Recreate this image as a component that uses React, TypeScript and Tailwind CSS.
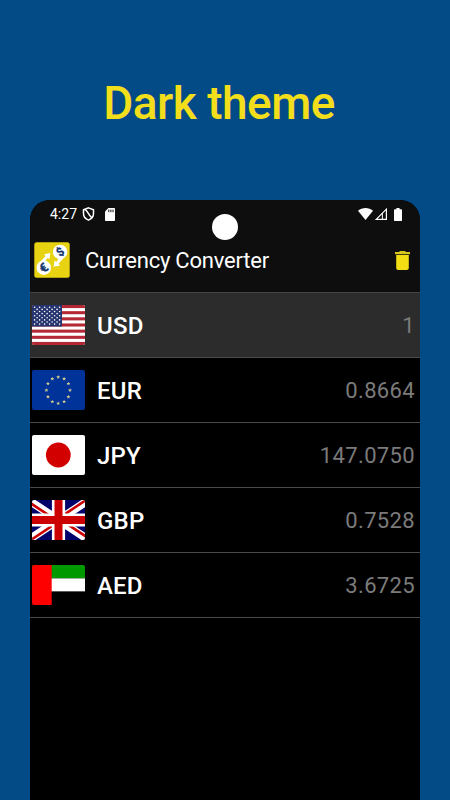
import type { ReactNode } from "react";

type Row = {
  code: string;
  value: string;
  flag: ReactNode;
};

const canton = Array.from({ length: 9 }, (_, r) =>
  Array.from({ length: r % 2 === 0 ? 6 : 5 }, (_, c) => ({
    x: 2.6 + c * 5 + (r % 2 === 0 ? 0 : 2.5),
    y: 2.3 + r * 2.1,
  }))
).flat();

const star = "M0-2 .55-.7 2-.65.85.3 1.25 1.7 0 .9-1.25 1.7-.85.3-2-.65-.55-.7Z";

function UsFlag() {
  return (
    <svg viewBox="0 0 53 40" className="block h-full w-full">
      <rect width="53" height="40" fill="#fff" />
      {[0, 2, 4, 6, 8, 10, 12].map((i) => (
        <rect key={i} y={(i * 40) / 13} width="53" height={40 / 13} fill="#b52735" />
      ))}
      <rect width="30" height="21.5" fill="#25346f" />
      {canton.map((s, i) => (
        <circle key={i} cx={s.x} cy={s.y} r="0.8" fill="#fff" />
      ))}
    </svg>
  );
}

function EuFlag() {
  return (
    <svg viewBox="0 0 53 40" className="block h-full w-full">
      <rect width="53" height="40" fill="#003399" />
      {Array.from({ length: 12 }, (_, i) => {
        const a = (i * Math.PI) / 6;
        const x = 26.2 + 11.8 * Math.sin(a);
        const y = 20.2 - 13.2 * Math.cos(a);
        return <path key={i} d={star} transform={`translate(${x} ${y})`} fill="#d3cd8c" />;
      })}
    </svg>
  );
}

function JpFlag() {
  return (
    <svg viewBox="0 0 53 40" className="block h-full w-full">
      <rect width="53" height="40" fill="#fff" />
      <circle cx="26.3" cy="20" r="12.4" fill="#d30000" />
    </svg>
  );
}

function GbFlag() {
  return (
    <svg viewBox="0 0 53 40" className="block h-full w-full">
      <rect width="53" height="40" fill="#00006b" />
      <path d="M-6-1.5 59 41.5M59-1.5-6 41.5" stroke="#fff" strokeWidth="8" />
      <path d="M-6 .2 26.5 21.7M59 39.8 26.5 18.3M59-3.2 26.5 18.3M-6 43.2 26.5 21.7" stroke="#cc0000" strokeWidth="2.6" />
      <path d="M26.5 0V40M0 20H53" stroke="#fff" strokeWidth="13.2" />
      <path d="M26.5 0V40M0 20H53" stroke="#cc0000" strokeWidth="8" />
    </svg>
  );
}

function AeFlag() {
  return (
    <svg viewBox="0 0 53 40" className="block h-full w-full">
      <rect width="53" height="13.4" fill="#009900" />
      <rect y="13.4" width="53" height="13.2" fill="#fff" />
      <rect y="26.6" width="53" height="13.4" fill="#000" />
      <rect width="19.7" height="40" fill="#ff0000" />
    </svg>
  );
}

const rows: Row[] = [
  { code: "USD", value: "1", flag: <UsFlag /> },
  { code: "EUR", value: "0.8664", flag: <EuFlag /> },
  { code: "JPY", value: "147.0750", flag: <JpFlag /> },
  { code: "GBP", value: "0.7528", flag: <GbFlag /> },
  { code: "AED", value: "3.6725", flag: <AeFlag /> },
];

function AppLogo() {
  return (
    <svg width="36" height="36" viewBox="0 0 36 36" className="shrink-0">
      <rect x="0.3" y="0.3" width="35.4" height="35.4" rx="2.5" fill="#e8d313" />
      <circle cx="9.8" cy="25.7" r="7.2" fill="#fff" />
      <circle cx="26.1" cy="9.9" r="7.2" fill="#fff" />
      <path d="M6 20 11.7 13.9 10 12.2 16.4 10.9 15.4 17.2 13.7 15.7 10.5 20Z" fill="#fff" />
      <path d="M30 15.5 24.5 21.8 26.2 23.5 19.6 24.8 20.6 18.4 22.4 20 25.4 15.5Z" fill="#fff" />
      <text x="9.6" y="30.2" textAnchor="middle" transform="rotate(-38 9.6 25.7)" fontFamily="Roboto, sans-serif" fontWeight="700" fontSize="12.5" fill="#12356f" stroke="#12356f" strokeWidth=".4">€</text>
      <text x="26.1" y="13.9" textAnchor="middle" transform="rotate(-38 26.1 9.9)" fontFamily="Roboto, sans-serif" fontWeight="700" fontSize="11.5" fill="#12356f" stroke="#12356f" strokeWidth=".3">$</text>
    </svg>
  );
}

function StatusBar() {
  return (
    <div className="flex h-[28px] items-center pl-5 pr-[18px] text-white">
      <span className="w-8 text-[14px] leading-none">4:27</span>
      <svg width="13" height="14" viewBox="0 0 12 14" fill="none" stroke="#fff" strokeWidth="1.5">
        <path d="M6 .9 11 2.8V6.6C11 9.7 9 12 6 13.1 3 12 1 9.7 1 6.6V2.8Z" />
        <path d="M2 2.6C5.4 3.2 5 7.2 9.4 10.8" />
      </svg>
      <svg width="10" height="13" viewBox="0 0 10 13" className="ml-[10px]">
        <path d="M3.4 0H9C9.6 0 10 .4 10 1V12C10 12.6 9.6 13 9 13H1C.4 13 0 12.6 0 12V3.6Z" fill="#fff" />
        <path d="M3.8 1.6V4.2M5.9 1.6V4.2M8 1.6V4.2" stroke="#0f0f0f" strokeWidth="1" />
      </svg>
      <div className="ml-auto flex items-center">
        <svg width="15" height="12" viewBox="0 0 15 12">
          <path d="M7.5 12 0 2.7C4.4-.9 10.6-.9 15 2.7Z" fill="#fff" />
        </svg>
        <svg width="12" height="12" viewBox="0 0 12 12" className="ml-[2px]">
          <path d="M11.4 1.2V11.4H1.2Z" fill="none" stroke="#fff" strokeWidth="1.2" />
          <path d="M7.4 5.2V11" stroke="#fff" strokeWidth="1" />
        </svg>
        <svg width="8" height="13" viewBox="0 0 8 13" className="ml-[7px]">
          <path d="M2.4 0H5.6V1.3H7.2C7.7 1.3 8 1.6 8 2.1V12.2C8 12.7 7.7 13 7.2 13H.8C.3 13 0 12.7 0 12.2V2.1C0 1.6.3 1.3.8 1.3H2.4Z" fill="#fff" />
        </svg>
      </div>
    </div>
  );
}

function TrashIcon() {
  return (
    <svg width="15" height="19" viewBox="0 0 15 19">
      <path d="M0 1.1H4L5 0H10L11 1.1H15V3.2H0Z" fill="#d9c61c" />
      <path d="M1.2 4H13.8V17C13.8 18.1 12.9 19 11.8 19H3.2C2.1 19 1.2 18.1 1.2 17Z" fill="#f3dd13" />
    </svg>
  );
}

export default function App() {
  return (
    <main className="flex h-[800px] w-[450px] flex-col overflow-hidden bg-[#034b86] font-[Roboto,sans-serif]">
      <h1 className="flex h-[200px] items-center justify-center pt-[5px] pr-3 text-[46px] leading-none font-medium tracking-[-0.5px] text-[#f3de1c]">
        <span>Dark theme</span>
      </h1>
      <div className="relative mx-[30px] w-[390px] flex-1 overflow-hidden rounded-t-[20px] bg-black">
        <header className="h-[93px] border-b border-[#444] bg-[#0e0e0e]">
          <StatusBar />
          <div className="flex h-16 items-center pr-[10px] pl-1">
            <AppLogo />
            <span className="ml-[15px] pt-[2px] text-[22px] leading-none tracking-[-0.22px] text-white">Currency Converter</span>
            <div className="ml-auto">
              <TrashIcon />
            </div>
          </div>
        </header>
        {/* camera cutout */}
        <div className="absolute top-[14px] left-[182px] size-[26px] rounded-full bg-white" />
        <ul>
          {rows.map((row, i) => (
            <li
              key={row.code}
              className={`flex h-[65px] items-center border-b border-[#4a4a4d] pr-[5px] pl-[2px] ${i === 0 ? "bg-[#2c2c2c]" : ""}`}
            >
              <div className="h-10 w-[53px] overflow-hidden rounded-[2px]">{row.flag}</div>
              <span className="ml-3 pt-px text-[24px] leading-none font-medium tracking-[0.2px] text-white">{row.code}</span>
              <span className="ml-auto pt-[2px] text-[22px] leading-none tracking-[0.35px] text-[#7b7b7b]">{row.value}</span>
            </li>
          ))}
        </ul>
      </div>
    </main>
  );
}
